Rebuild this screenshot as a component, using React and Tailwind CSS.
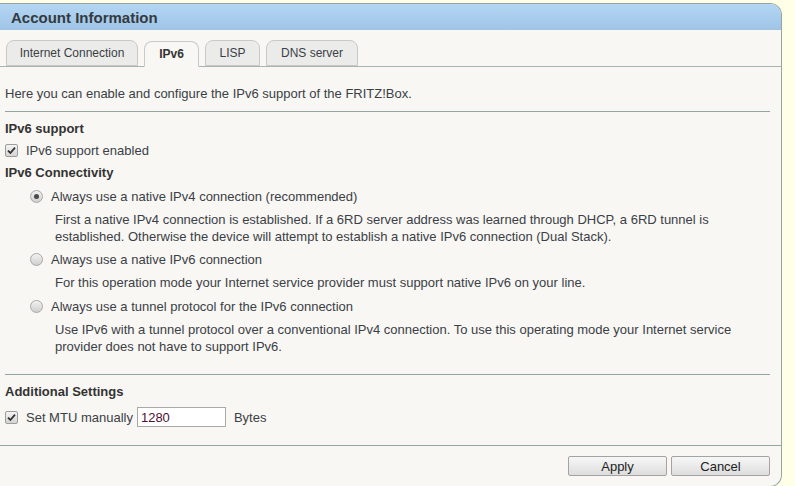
import React from 'react'

function Checkbox() {
  return (
    <span className="inline-flex items-center justify-center w-[13px] h-[13px] rounded-[2px] border border-[#9d9d9d] bg-gradient-to-b from-[#f4f4f4] to-[#d4d4d4]">
      <svg width="9" height="9" viewBox="0 0 9 9">
        <path d="M1 4.6 L3.4 7 L8 1.6" fill="none" stroke="#333" strokeWidth="1.8" />
      </svg>
    </span>
  )
}

function Radio({ checked }) {
  return (
    <span className="inline-flex items-center justify-center w-[13px] h-[13px] rounded-full border border-[#a8a8a8] bg-gradient-to-b from-[#f2f2f2] to-[#cfcfcf]">
      {checked && <span className="w-[5px] h-[5px] rounded-full bg-[#4a4a4a]" />}
    </span>
  )
}

function Tab({ label, active, width }) {
  return (
    <div
      className={`h-[26px] rounded-t-[8px] border border-[#c9c9c9] flex items-center justify-center text-[12px] ${width} ${
        active
          ? 'bg-[#f8f7f3] border-b-[#f8f7f3] font-bold text-[#333] relative top-[1px]'
          : 'bg-[#ebebea] text-[#3a3f45]'
      }`}
    >
      {label}
    </div>
  )
}

function Opcion({ checked, label, children }) {
  return (
    <div>
      <div className="flex items-center h-[17px] pl-[25px]">
        <Radio checked={checked} />
        <span className="ml-[8px]">{label}</span>
      </div>
      <div className="pl-[50px] pr-[30px] mt-[6px]">{children}</div>
    </div>
  )
}

export default function App() {
  return (
    <div className="min-h-[486px] bg-[#fffee6] pt-[3px] text-[13px] leading-[17px] text-[#3b4046] font-['Liberation_Sans',Arial,sans-serif]">
      <div className="w-[782px] border-t border-r border-b border-[#93a6a0] rounded-tr-[12px] rounded-br-[12px] bg-[#f8f7f3] overflow-hidden">
        <div className="h-[26px] bg-gradient-to-b from-[#b4d6f4] to-[#9fc4e6] flex items-center pl-[11px]">
          <span className="text-[15px] font-bold text-[#333a40]">Account Information</span>
        </div>

        <div className="mt-[10px] flex items-end gap-[6px] pl-[6px] border-b border-[#a8b4b0]">
          <Tab label="Internet Connection" width="w-[132px]" />
          <Tab label="IPv6" width="w-[55px]" active />
          <Tab label="LISP" width="w-[55px]" />
          <Tab label="DNS server" width="w-[92px]" />
        </div>

        <div className="pl-[5px] pr-[11px]">
          <p className="mt-[18px]">Here you can enable and configure the IPv6 support of the FRITZ!Box.</p>
          <div className="mt-[9px] border-t border-[#93a6a0]" />

          <h3 className="mt-[8px] font-bold text-[#333]">IPv6 support</h3>
          <div className="mt-[5px] flex items-center h-[17px]">
            <Checkbox />
            <span className="ml-[8px]">IPv6 support enabled</span>
          </div>

          <h3 className="mt-[5px] font-bold text-[#333]">IPv6 Connectivity</h3>

          <div className="mt-[7px]">
            <Opcion checked label="Always use a native IPv4 connection (recommended)">
              First a native IPv4 connection is established. If a 6RD server address was learned through DHCP, a 6RD tunnel is established. Otherwise the device will attempt to establish a native IPv6 connection (Dual Stack).
            </Opcion>
          </div>
          <div className="mt-[6px]">
            <Opcion label="Always use a native IPv6 connection">
              <div className="mt-[1px]">For this operation mode your Internet service provider must support native IPv6 on your line.</div>
            </Opcion>
          </div>
          <div className="mt-[7px]">
            <Opcion label="Always use a tunnel protocol for the IPv6 connection">
              Use IPv6 with a tunnel protocol over a conventional IPv4 connection. To use this operating mode your Internet service provider does not have to support IPv6.
            </Opcion>
          </div>

          <div className="mt-[19px] border-t border-[#93a6a0]" />

          <h3 className="mt-[8px] font-bold text-[#333]">Additional Settings</h3>
          <div className="mt-[7px] flex items-center h-[20px]">
            <Checkbox />
            <span className="ml-[8px]">Set MTU manually</span>
            <input
              defaultValue="1280"
              className="ml-[4px] w-[89px] h-[20px] border border-[#a9a9a9] bg-white px-[3px] text-[13px] text-[#4b1232] outline-none"
            />
            <span className="ml-[8px]">Bytes</span>
          </div>
        </div>

        <div className="mt-[18px] border-t border-[#93a6a0]" />

        <div className="flex justify-end gap-[4px] pr-[11px] mt-[10px] pb-[10px]">
          <button className="w-[99px] h-[20px] border border-[#a3a3a3] rounded-[2px] bg-gradient-to-b from-[#f7f7f7] to-[#dddddd] text-[13px] text-[#222]">Apply</button>
          <button className="w-[99px] h-[20px] border border-[#a3a3a3] rounded-[2px] bg-gradient-to-b from-[#f7f7f7] to-[#dddddd] text-[13px] text-[#222]">Cancel</button>
        </div>
      </div>
    </div>
  )
}
